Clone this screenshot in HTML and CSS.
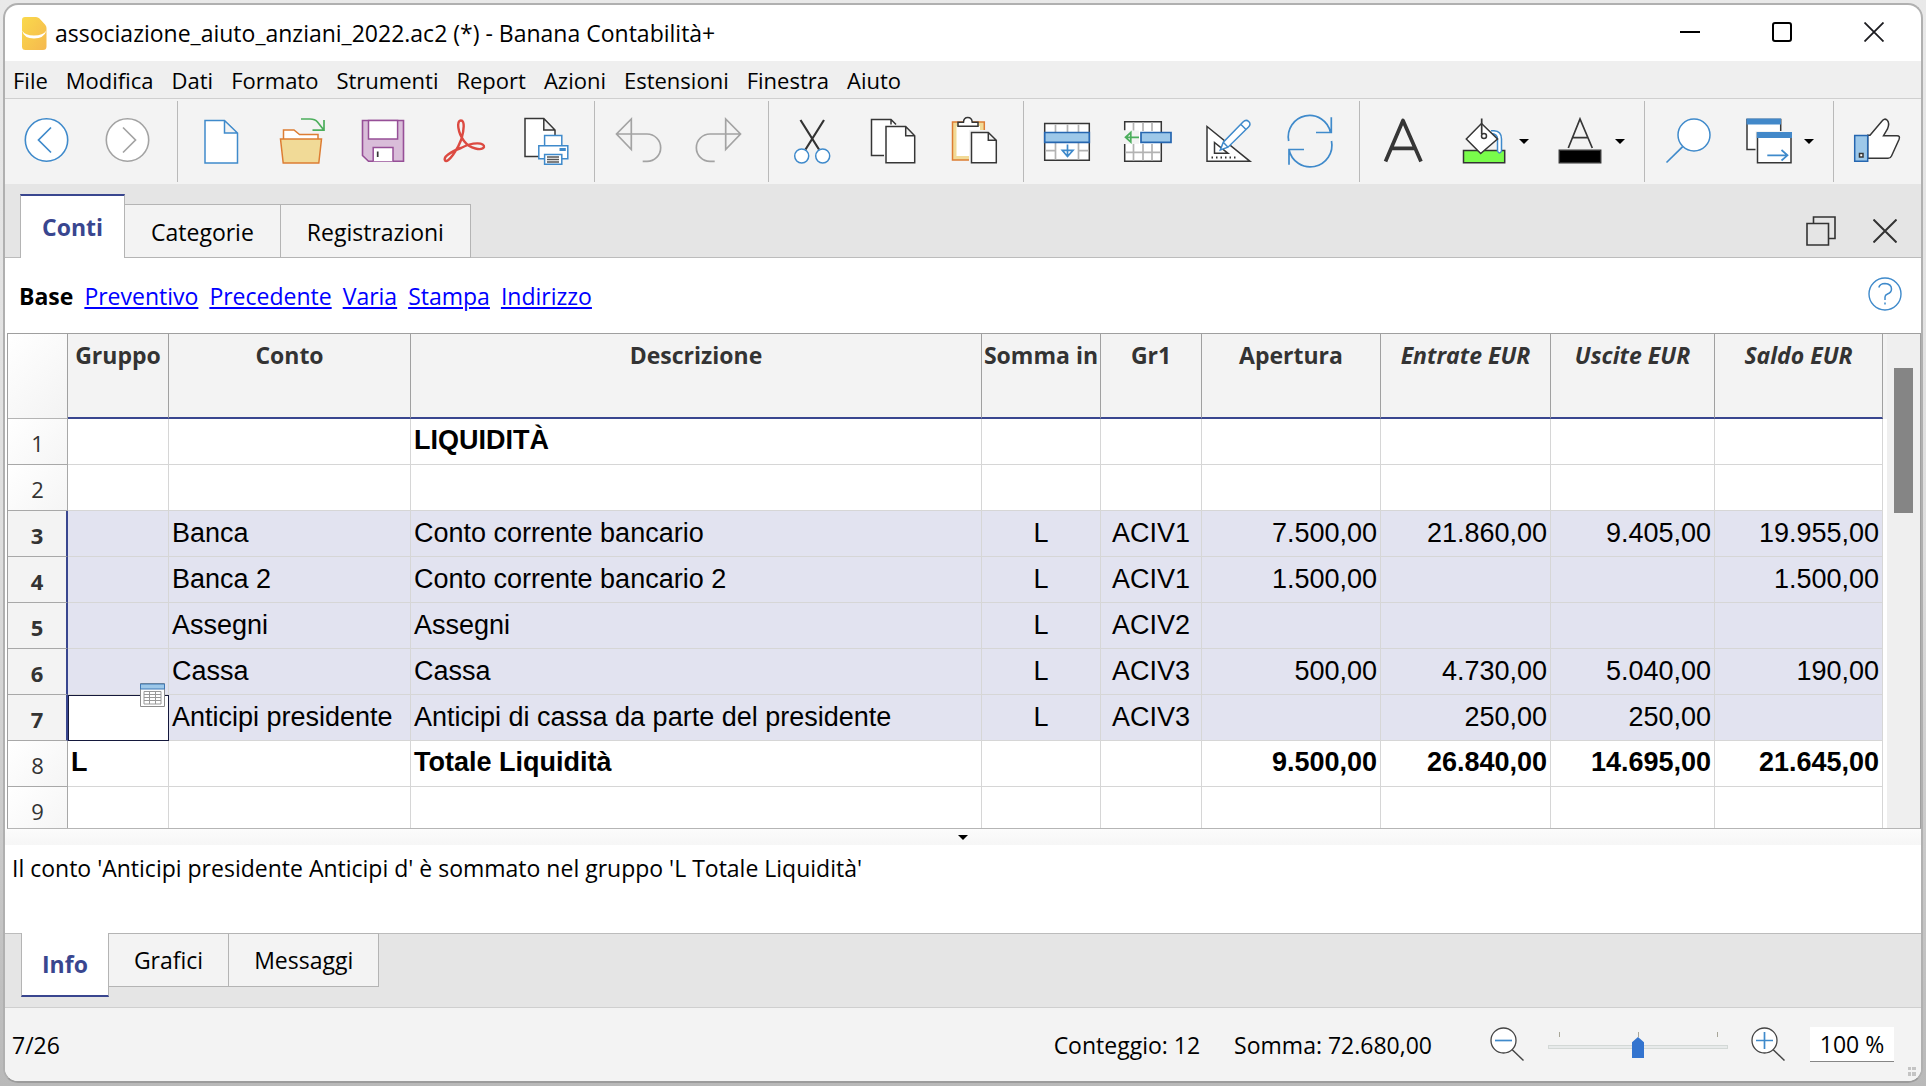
FILE: index.html
```html
<!DOCTYPE html>
<html lang="it">
<head>
<meta charset="utf-8">
<title>associazione_aiuto_anziani_2022.ac2 (*) - Banana Contabilità+</title>
<link rel="stylesheet" href="styles.css">
</head>
<body>
<div class="window">
  <header class="titlebar">
    <svg class="app-icon" width="25" height="33" viewBox="0 0 25 33"><defs><linearGradient id="ban" x1="0" y1="0" x2="1" y2="1"><stop offset="0" stop-color="#fad94b"/><stop offset="1" stop-color="#f5b84f"/></linearGradient></defs><path d="M3 0H14Q16 0 17.5 1.500L23 7.500Q24.500 9 24.500 11V29.500Q24.500 33 21 33H3.500Q0 33 0 29.500V3Q0 0 3 0Z" fill="url(#ban)"/><path d="M0 13.500Q3 18.500 12 18.500T24.500 13.500Q22 21.500 12 21.500T0 13.500Z" fill="#fff"/></svg>
    <h1 class="title">associazione_aiuto_anziani_2022.ac2 (*) - Banana Contabilità+</h1>
    <div class="window-controls">
      <button class="wbtn" aria-label="Riduci a icona"><svg width="20" height="20"><path d="M0 10H20" stroke="#000" stroke-width="2"/></svg></button>
      <button class="wbtn" aria-label="Ingrandisci"><svg width="20" height="20"><rect x="1" y="1" width="18" height="18" rx="2" fill="none" stroke="#000" stroke-width="2"/></svg></button>
      <button class="wbtn" aria-label="Chiudi"><svg width="20" height="20"><path d="M.5.5L19.500 19.500M19.500.5L.5 19.500" stroke="#1c1c20" stroke-width="1.800"/></svg></button>
    </div>
  </header>

  <nav class="menubar">
    <button>File</button><button>Modifica</button><button>Dati</button><button>Formato</button><button>Strumenti</button><button>Report</button><button>Azioni</button><button>Estensioni</button><button>Finestra</button><button>Aiuto</button>
  </nav>

  <div class="toolbar" role="toolbar">
    <button class="tool" aria-label="Indietro"><svg viewBox="0 0 47 49"><circle cx="23.500" cy="23" r="21.200" fill="#fff" stroke="#3f8acb" stroke-width="1.600"/><path d="M28 10.500L15.500 23L28 35.500" class="l blue"/></svg></button>
    <button class="tool" aria-label="Avanti"><svg viewBox="0 0 47 49"><circle cx="23.500" cy="23" r="21.200" fill="#fff" stroke="#a3a3a3" stroke-width="1.600"/><path d="M19 10.500L31.500 23L19 35.500" class="l grey"/></svg></button>
    <span class="sep"></span>
    <button class="tool" aria-label="Nuovo"><svg viewBox="0 0 47 49"><path d="M8 3.500H27.500L40.500 16V46H8ZM27.500 3.500V16H40.500" class="w blue"/></svg></button>
    <button class="tool" aria-label="Apri"><svg viewBox="0 0 47 49"><path d="M5.500 22V13H16L21.500 17.500H40V22" class="w orange"/><path d="M2.500 22H43.500L40.800 46H5.200Z" fill="#f1da97" stroke="#dd7d33" stroke-width="1.500"/><path d="M23 2H32Q37 2 39.500 5L46 13.200M46 3V13.200H34.500" class="l green"/></svg></button>
    <button class="tool" aria-label="Salva"><svg viewBox="0 0 47 49"><path d="M3.500 3.500H44.500V44.300H9.500L3.500 38.500Z" fill="#d9bdd9" stroke="#964f97" stroke-width="1.600"/><path d="M9.500 3.500V22H38.600V3.500ZM14.200 44.300V30.500H34V44.300" fill="#fff" stroke="#964f97" stroke-width="1.500"/><path d="M18.700 34.500V40" class="l dark"/></svg></button>
    <button class="tool" aria-label="Esporta PDF"><svg viewBox="0 0 47 49"><path d="M21 3.500C16 3.500 18 16 24 24C30 32 42 34 44 30C45 26 34 24 21 31C10 35 3 40 5 43.500C8 47 18 32 21.500 22C24 13 25 3.500 21 3.500Z" fill="none" stroke="#dc4a41" stroke-width="2.400"/></svg></button>
    <button class="tool" aria-label="Stampa"><svg viewBox="0 0 47 49"><path d="M4 1.500H22.800L34 13V39.500H4ZM22.800 1.500V13H34" class="w dark"/><path d="M23.600 18.500H40.800V29H23.600Z" class="w blue"/><path d="M17.800 28.800H46.800V41.700H17.800Z" class="w blue"/><path d="M38.500 31H44.800V34H38.500Z" fill="#3f8acb"/><path d="M23.600 37.500H40.800V47.300H23.600Z" class="w blue"/><path d="M26 40H38M26 42.500H38M26 45H38" stroke="#555" stroke-width="1.300"/></svg></button>
    <span class="sep"></span>
    <button class="tool" aria-label="Annulla"><svg viewBox="0 0 47 49"><path d="M17.300 2V32.500L2.500 17ZM2.500 17H33a13.600 13.600 0 0 1 0 27.300H28.700" class="l grey"/></svg></button>
    <button class="tool" aria-label="Ripeti"><svg viewBox="0 0 47 49"><path d="M30.700 2V32.500L45.500 17ZM45.500 17H15a13.600 13.600 0 0 0 0 27.300H19.700" class="l grey"/></svg></button>
    <span class="sep"></span>
    <button class="tool" aria-label="Taglia"><svg viewBox="0 0 47 49"><path d="M12.500 3L31 32.500M36 3L17.500 32.500" stroke="#333" stroke-width="2.200"/><circle cx="13.700" cy="39" r="7" class="w blue"/><circle cx="34.700" cy="39" r="7" class="w blue"/></svg></button>
    <button class="tool" aria-label="Copia"><svg viewBox="0 0 47 49"><path d="M15 38.500H2.500V2.500H22L27 7.500M22 2.500V7.500" class="w dark"/><path d="M17 9.500H36.700L45.700 18.700V45.700H17ZM36.700 9.500V18.700H45.700" class="w dark"/></svg></button>
    <button class="tool" aria-label="Incolla"><svg viewBox="0 0 47 49"><path d="M2.500 5H34.300V43H2.500Z" fill="#f1da97" stroke="#dd7d33" stroke-width="1.500"/><path d="M6.500 9H30V39H6.500Z" fill="#fff"/><path d="M19 13H37V48H19Z" fill="#f3f3f3"/><path d="M8 9.300V5.300H13.500Q13.700.5 17.800.5T22.200 5.300H28V9.300Z" class="w dark"/><path d="M21.500 15.500H38.300L46.300 23.300V45.700H21.500ZM38.300 15.500V23.300H46.300" class="w dark"/></svg></button>
    <span class="sep"></span>
    <button class="tool" aria-label="Inserisci righe"><svg viewBox="0 0 47 49"><path d="M1.700 6.500H46.300V43.300H1.700Z" class="w dark"/><path d="M12.500 7.500V15M24.500 7.500V15M35.500 7.500V15M12.500 26V42.500M35.500 26V42.500M2.500 33.700H12.500M35.500 33.700H45.500" class="l soft"/><path d="M1.700 15.500H46.300V25.300H1.700Z" fill="#9dc8e9" stroke="#2566b0" stroke-width="1.700"/><path d="M24.500 27.500V39M19.300 33.300H30L24.500 39.500Z" class="l blue"/></svg></button>
    <button class="tool" aria-label="Elimina righe"><svg viewBox="0 0 47 49"><path d="M.7 13.500V4.700H37.300V44.300H.7V27" class="w dark"/><path d="M9.500 5.500V14M19 5.500V14M28 5.500V14M9.500 27V43.500M19 27V43.500M28 27V43.500M1.500 35.300H36.500" class="l soft"/><path d="M0 13.500H15V27H0Z" fill="#f3f3f3"/><path d="M17 15.500H47V25.300H17Z" fill="#9dc8e9" stroke="#2566b0" stroke-width="1.700"/><path d="M1.500 20.300H15M6.800 15.500V25L1.500 20.300Z" class="l green"/></svg></button>
    <button class="tool" aria-label="Modifica righe"><svg viewBox="0 0 47 49"><path d="M2 9.500V44.300H45Z" class="w dark"/><path d="M9.500 25.500V36.300H23Z" class="w dark"/><path d="M6.500 40.500H31" stroke="#333" stroke-width="2.200" stroke-dasharray="1.500 3"/><path d="M15.300 33L18.300 25.200L38 5Q41 2 43.700 4.500T43.500 10L23 30.200ZM18.300 25.200L23 30.200M36 7.500L41 12.500" class="w blue"/></svg></button>
    <button class="tool" aria-label="Ricalcola"><svg viewBox="0 0 47 49"><path d="M2.700 24A21.300 21.300 0 0 1 44.500 15.500M45.300.3V15.500H30M45.500 24A21.300 21.300 0 0 1 3 32.500M3 47.700V32.500H18" class="l blue"/></svg></button>
    <span class="sep"></span>
    <button class="tool" aria-label="Carattere"><svg viewBox="0 0 47 49"><path d="M6.500 44.500L24 3.500L42 44.500M12.700 31.300H35.700" fill="none" stroke="#363636" stroke-width="3.700" stroke-linejoin="round"/></svg></button>
    <button class="tool split" aria-label="Colore di sfondo"><svg viewBox="0 0 47 49"><path d="M3.500 33.500H44.700V45.700H3.500Z" fill="#79fc4b" stroke="#333" stroke-width="1.500"/><path d="M31 13.700H34Q41.500 14 41.500 22V34Q39.500 38 37.500 34V22Q37.500 17 31 16.500" class="w blue"/><path d="M21.500 6.500L37.500 22L20.700 36.500L6.300 22Z" class="w dark"/><path d="M21.700 1.500V17" class="l dark"/><circle cx="24" cy="19" r="2.500" class="w dark"/></svg><i class="caret"></i></button>
    <button class="tool split" aria-label="Colore del testo"><svg viewBox="0 0 47 49"><path d="M3.300 33.300H44.700V45.700H3.300Z" fill="#000" stroke="#333" stroke-width="1.500"/><path d="M12.300 31L24 2L36.300 31M16.500 20.700H32" class="l dark"/></svg><i class="caret"></i></button>
    <span class="sep"></span>
    <button class="tool" aria-label="Cerca"><svg viewBox="0 0 47 49"><path d="M18.700 29.700L2.500 45.500" class="l blue"/><circle cx="30" cy="18" r="16" class="w blue"/></svg></button>
    <button class="tool split" aria-label="Finestre"><svg viewBox="0 0 47 49"><path d="M2 2.500H35.700V32.500H2Z" class="w dark"/><path d="M1.500 1.500H36V7.500H1.500Z" fill="#4288c9"/><path d="M10.500 14H38V48H10.500Z" fill="#f3f3f3"/><path d="M12.500 16H46V45.700H12.500Z" class="w dark"/><path d="M11.800 15H47V21H11.800Z" fill="#4288c9"/><path d="M22.300 38.300H42.500M36.500 33L42.500 38.300L36.500 43.500" class="l blue"/></svg><i class="caret"></i></button>
    <span class="sep"></span>
    <button class="tool" aria-label="Mi piace"><svg viewBox="0 0 47 49"><path d="M14.700 18.300H17L29.500 3.500Q31.500 1 34 3Q37 6 34.500 12L30.500 18.700H44Q47.500 18.700 46 22.500L38.500 39Q37.500 41.300 35 41.300H14.700Z" class="w dark"/><path d="M1.700 18.500H14.700V44.300H1.700Z" fill="#9dc8e9" stroke="#2566b0" stroke-width="1.500"/><path d="M6.500 36.500H10V40H6.500Z" class="w dark"/></svg></button>
  </div>

  <div class="tabstrip" role="tablist">
    <button class="tab active" role="tab" aria-selected="true">Conti</button>
    <button class="tab" role="tab">Categorie</button>
    <button class="tab" role="tab">Registrazioni</button>
    <div class="strip-actions">
      <button aria-label="Stacca finestra"><svg width="30" height="30"><path d="M7.500 7.500V1H29V22.500H22.500M1 7.500H22.500V29H1Z" fill="none" stroke="#333" stroke-width="1.600"/></svg></button>
      <button aria-label="Chiudi scheda"><svg width="24" height="24"><path d="M.5.5L23.500 23.500M23.500.5L.5 23.500" stroke="#333" stroke-width="2"/></svg></button>
    </div>
  </div>

  <nav class="views">
    <b>Base</b><a href="#preventivo">Preventivo</a><a href="#precedente">Precedente</a><a href="#varia">Varia</a><a href="#stampa">Stampa</a><a href="#indirizzo">Indirizzo</a>
    <button class="help" aria-label="Aiuto"><svg width="34" height="34"><circle cx="17" cy="17" r="16" fill="none" stroke="#3f8acb" stroke-width="1.400"/><path d="M10.800 10.500Q12 6.500 17 6.500Q23.500 7 23.500 12Q23.500 15.500 19.500 17Q17 18 17 20V23M17 25.500V27.500" fill="none" stroke="#3f8acb" stroke-width="1.500"/></svg></button>
  </nav>

  <main class="sheet">
    <div class="grid">
      <table>
        <colgroup><col class="c-row"><col class="c-gruppo"><col class="c-conto"><col><col class="c-somma"><col class="c-gr1"><col class="c-ap"><col class="c-ent"><col class="c-usc"><col class="c-sal"></colgroup>
        <thead><tr><td></td><th>Gruppo</th><th>Conto</th><th>Descrizione</th><th>Somma in</th><th>Gr1</th><th>Apertura</th><th class="calc">Entrate EUR</th><th class="calc">Uscite EUR</th><th class="calc">Saldo EUR</th></tr></thead>
        <tbody>
          <tr class="bold"><th>1</th><td></td><td></td><td>LIQUIDITÀ</td><td></td><td></td><td></td><td></td><td></td><td></td></tr>
          <tr><th>2</th><td></td><td></td><td></td><td></td><td></td><td></td><td></td><td></td><td></td></tr>
          <tr class="sel"><th>3</th><td></td><td>Banca</td><td>Conto corrente bancario</td><td>L</td><td>ACIV1</td><td>7.500,00</td><td>21.860,00</td><td>9.405,00</td><td>19.955,00</td></tr>
          <tr class="sel"><th>4</th><td></td><td>Banca 2</td><td>Conto corrente bancario 2</td><td>L</td><td>ACIV1</td><td>1.500,00</td><td></td><td></td><td>1.500,00</td></tr>
          <tr class="sel"><th>5</th><td></td><td>Assegni</td><td>Assegni</td><td>L</td><td>ACIV2</td><td></td><td></td><td></td><td></td></tr>
          <tr class="sel"><th>6</th><td></td><td>Cassa</td><td>Cassa</td><td>L</td><td>ACIV3</td><td>500,00</td><td>4.730,00</td><td>5.040,00</td><td>190,00</td></tr>
          <tr class="sel"><th>7</th><td class="current"><button class="picker" aria-label="Apri elenco"><svg width="25" height="24"><path d="M.5.5H24.500V23.500H.5Z" fill="#fff" stroke="#8c8c8c"/><path d="M.5 1H24.500V6H.5Z" fill="#9dc8e9" stroke="#3f78b5"/><path d="M4 8.500H21V21H4ZM4 11.500H21M4 14.500H21M4 17.500H21M9.500 8.500V21M15.500 8.500V21" fill="none" stroke="#999"/></svg></button></td><td>Anticipi presidente</td><td>Anticipi di cassa da parte del presidente</td><td>L</td><td>ACIV3</td><td></td><td>250,00</td><td>250,00</td><td></td></tr>
          <tr class="bold"><th>8</th><td>L</td><td></td><td>Totale Liquidità</td><td></td><td></td><td>9.500,00</td><td>26.840,00</td><td>14.695,00</td><td>21.645,00</td></tr>
          <tr><th>9</th><td></td><td></td><td></td><td></td><td></td><td></td><td></td><td></td><td></td></tr>
        </tbody>
      </table>
    </div>
    <div class="gutter"></div>
    <div class="scrollbar"><div class="thumb"></div></div>
  </main>

  <div class="splitter"><i class="caret"></i></div>
  <section class="info"><p>Il conto 'Anticipi presidente Anticipi d' è sommato nel gruppo 'L Totale Liquidità'</p></section>

  <div class="tabstrip lower" role="tablist">
    <button class="tab active" role="tab" aria-selected="true">Info</button>
    <button class="tab" role="tab">Grafici</button>
    <button class="tab" role="tab">Messaggi</button>
  </div>

  <footer class="statusbar">
    <span class="position">7/26</span>
    <span class="count">Conteggio: 12</span>
    <span class="sum">Somma: 72.680,00</span>
    <button class="zoom-out" aria-label="Riduci zoom"><svg width="34" height="35"><circle cx="13.500" cy="13.500" r="12.500" fill="#fff" stroke="#444" stroke-width="1.300"/><path d="M22 22.500L33.500 33.500" stroke="#444" stroke-width="1.500"/><path d="M5 13.500H22" stroke="#3f8acb" stroke-width="1.700"/></svg></button>
    <div class="slider"><span class="ticks"><i></i><i></i><i></i></span><input type="range" min="0" max="200" value="100" aria-label="Zoom"></div>
    <button class="zoom-in" aria-label="Aumenta zoom"><svg width="34" height="35"><circle cx="13.500" cy="13.500" r="12.500" fill="#fff" stroke="#444" stroke-width="1.300"/><path d="M22 22.500L33.500 33.500" stroke="#444" stroke-width="1.500"/><path d="M5 13.500H22M13.500 5V22" stroke="#3f8acb" stroke-width="1.700"/></svg></button>
    <input class="zoom-value" type="text" value="100 %" aria-label="Valore zoom">
    <svg class="grip" width="8" height="9"><path d="M0 0H3V3H0ZM4 0H8V3H4ZM0 5H3V9H0ZM4 5H8V9H4Z" fill="#c4c4c4"/></svg>
  </footer>
</div>
</body>
</html>
```
FILE: styles.css
```css
* { box-sizing: border-box; }

body {
  margin: 0;
  height: 100vh;
  padding: 3px;
  background: linear-gradient(#e9e9e9, #dedede 50%, #b9b9b9);
  font: 23px/32px "Open Sans", "Noto Sans", sans-serif;
  color: #000;
  overflow: hidden;
}

button, input {
  font: inherit;
  color: inherit;
  border: 0;
  padding: 0;
  margin: 0;
  background: none;
}

button svg { display: block; }

.window {
  height: 100%;
  display: flex;
  flex-direction: column;
  border: 2px solid #b0b0b0;
  border-bottom-color: #9c9c9c;
  border-radius: 15px;
  background: #fff;
  overflow: hidden;
}

.window > * { flex: none; }

/* title bar */
.titlebar {
  display: flex;
  align-items: center;
  height: 56px;
  padding: 0 1px 0 17px;
}
.title {
  flex: 1;
  margin: 0 0 0 8px;
  font-size: 23px;
  font-weight: 400;
  white-space: nowrap;
}
.window-controls {
  display: flex;
  align-self: flex-start;
}
.wbtn {
  width: 92px;
  height: 54px;
  display: grid;
  place-items: center;
}

/* menu bar */
.menubar {
  display: flex;
  gap: 2px;
  height: 38px;
  border-bottom: 1px solid #cfcfcf;
  background: #efefef;
  font-size: 22px;
}
.menubar button { padding: 1px 8px 0; }

/* tool bar */
.toolbar {
  display: flex;
  align-items: center;
  height: 85px;
  padding-left: 1px;
  background: #f3f3f3;
}
.tool {
  flex: none;
  width: 81px;
  display: flex;
  align-items: center;
  justify-content: center;
}
.tool svg { width: 47px; height: 49px; overflow: visible; }
.tool.split {
  width: 96px;
  justify-content: flex-start;
  gap: 12px;
  padding-left: 17px;
}
.sep {
  flex: none;
  width: 1px;
  height: 81px;
  margin: 0 2px 0 9px;
  background: #b9b9b9;
}
.caret {
  border: 5px solid transparent;
  border-top-color: #000;
  border-bottom: 0;
}
.l { fill: none; stroke-width: 1.7px; }
.w { fill: #fff; stroke-width: 1.5px; }
.blue { stroke: #3f8acb; }
.grey { stroke: #a3a3a3; }
.dark { stroke: #363636; }
.soft { stroke: #b3b3b3; }
.green { stroke: #4cae5c; }
.orange { stroke: #dd7d33; }

/* tab strips */
.tabstrip {
  display: flex;
  align-items: flex-end;
  height: 74px;
  padding-left: 15px;
  background: linear-gradient(#bcbcbc, #bcbcbc) bottom / 100% 1px no-repeat #e5e5e5;
}
.tab {
  height: 54px;
  padding: 2px 26px 0;
  border: 1px solid #b4b4b4;
  border-left-width: 0;
  background: #f3f3f3;
}
.tab.active {
  height: 64px;
  padding: 0 21px;
  border-width: 2px 1px 0;
  border-top-color: #39468f;
  background: #fff;
  font-weight: 700;
  color: #39468f;
}
.strip-actions {
  display: flex;
  align-items: center;
  gap: 37px;
  height: 54px;
  margin-left: auto;
  padding-right: 24px;
}
.lower {
  align-items: flex-start;
  height: 75px;
  padding-left: 16px;
  border-bottom: 1px solid #cfcfcf;
  background-position: top;
}
.lower .tab { padding: 0 25px; }
.lower .tab.active {
  padding: 0 20px;
  border-width: 0 1px 2px;
  border-bottom-color: #39468f;
}

/* view links */
.views {
  display: flex;
  align-items: center;
  gap: 11px;
  height: 75px;
  padding: 0 19px 0 14px;
}
.views a { color: #0000ff; }
.help { margin: 0 0 3px auto; }

/* account table */
.window > .sheet {
  flex: 1 1 0;
  min-height: 0;
  display: flex;
  margin-left: 2px;
  border: 1px solid #9f9f9f;
  border-bottom-color: #b5b5b5;
}
.grid { flex: 1; overflow: hidden; }
.grid table {
  width: 100%;
  table-layout: fixed;
  border-collapse: separate;
  border-spacing: 0;
}
.c-row { width: 60px; }
.c-gruppo, .c-gr1 { width: 101px; }
.c-conto { width: 242px; }
.c-somma { width: 119px; }
.c-ap { width: 179px; }
.c-ent { width: 170px; }
.c-usc { width: 164px; }
.c-sal { width: 168px; }

thead td, thead th {
  height: 85px;
  padding: 5px 0 0;
  vertical-align: top;
  border-right: 1px solid #a0a0a0;
  border-bottom: 2px solid #39468f;
  background: #f3f3f3;
  color: #333;
  white-space: nowrap;
}
thead td {
  border-bottom: 1px solid #b4b4b4;
  background: linear-gradient(135deg, #fff, #f3f3f3);
}
.calc { font-style: italic; }

tbody td {
  position: relative;
  height: 46px;
  padding: 0 3px 1px;
  border-right: 1px solid #d6d6d6;
  border-bottom: 1px solid #d6d6d6;
  font: 27px/44px "Liberation Sans", Arial, sans-serif;
  white-space: nowrap;
}
tbody th {
  height: 46px;
  padding: 3px 0 0;
  border-right: 1px solid #a8a8a8;
  border-bottom: 1px solid #a8a8a8;
  background: linear-gradient(135deg, #fff, #f5f5f5);
  font-size: 22px;
  font-weight: 400;
  color: #333;
}
td:nth-child(5), td:nth-child(6) { text-align: center; }
td:nth-child(n+7) { text-align: right; }
.bold td {
  padding-bottom: 3px;
  line-height: 42px;
  font-weight: 700;
}
.sel td { background: #e2e3f0; }
.sel th {
  border-right: 2px solid #39468f;
  background: #f3f3f3;
  font-weight: 700;
}
.sel .current {
  background: #fff;
  outline: 1px solid #14183c;
  outline-offset: -1px;
}
.picker { position: absolute; top: -12px; right: 3px; }

.gutter {
  width: 4px;
  background: linear-gradient(#f3f3f3, #f3f3f3) top / 100% 85px no-repeat #fff;
}
.scrollbar {
  width: 33px;
  padding: 34px 7px;
  background: #efefef;
}
.thumb { height: 145px; background: #858585; }

/* message panel */
.splitter {
  display: flex;
  align-items: center;
  justify-content: center;
  height: 16px;
  background: linear-gradient(#fcfcfc, #f6f6f6);
}
.info { height: 88px; padding: 7px 7px 0; }
.info p { margin: 0; }

/* status bar */
.statusbar {
  display: flex;
  align-items: center;
  height: 73px;
  padding: 0 5px 0 7px;
  background: #f3f3f3;
}
.position { flex: 1; }
.sum { margin: 0 58px 0 34px; }
.slider {
  position: relative;
  width: 180px;
  height: 30px;
  margin: 0 23px 0 24px;
}
.ticks {
  position: absolute;
  top: 2px;
  left: 11px;
  right: 10px;
  display: flex;
  justify-content: space-between;
}
.ticks i { width: 1px; height: 5px; background: #a8a698; }
.slider input {
  position: relative;
  display: block;
  width: 100%;
  height: 30px;
  padding-top: 5px;
  appearance: none;
}
.slider input::-webkit-slider-runnable-track {
  height: 4px;
  border: 1px solid #d3d8d6;
  background: #e7eaea;
}
.slider input::-webkit-slider-thumb {
  appearance: none;
  width: 12px;
  height: 21px;
  margin-top: -9px;
  background: #3374cf;
  clip-path: polygon(50% 0, 100% 25%, 100% 100%, 0 100%, 0 25%);
}
.zoom-value {
  width: 84px;
  height: 35px;
  margin-left: 25px;
  border-bottom: 1px solid #868686;
  background: #fff;
  text-align: center;
}
.grip { align-self: flex-end; margin: 0 0 5px 14px; }
```
